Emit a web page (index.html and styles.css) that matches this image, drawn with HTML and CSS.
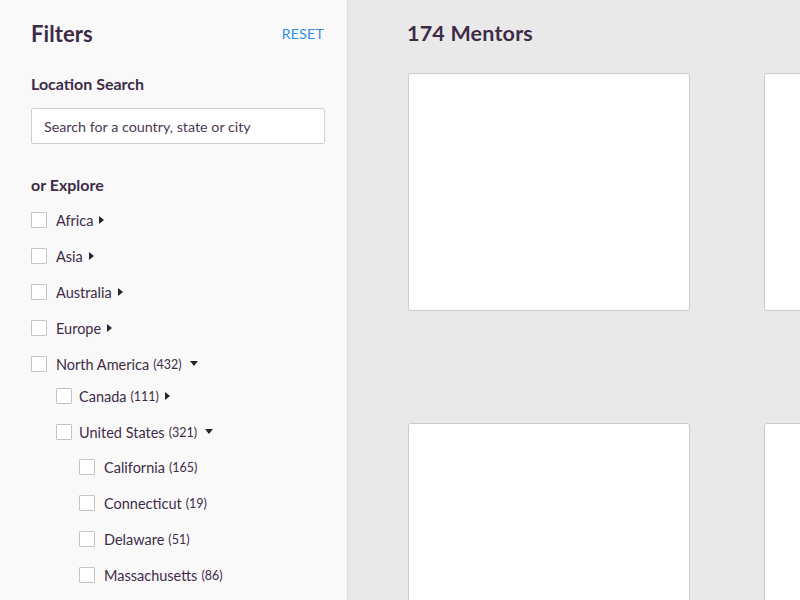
FILE: index.html
```html
<!DOCTYPE html>
<html lang="en">
<head>
  <meta charset="UTF-8" />
  <meta name="viewport" content="width=device-width, initial-scale=1.0" />
  <title>Mentors - Filters</title>
  <link rel="stylesheet" href="styles.css">
</head>
<body>
  <div class="page">
    <aside class="filters">
      <div class="filters-head">
        <h1>Filters</h1>
        <a href="#" class="reset">RESET</a>
      </div>

      <h2>Location Search</h2>
      <input type="text" class="search" placeholder="Search for a country, state or city" />

      <h2 class="explore">or Explore</h2>
      <ul class="tree">
        <li><label class="row"><span class="box"></span>Africa<svg class="arrow" width="6" height="8" viewBox="0 0 6 8"><path d="M0 0 L5 4 L0 8 Z"/></svg></label></li>
        <li><label class="row"><span class="box"></span>Asia<svg class="arrow" width="6" height="8" viewBox="0 0 6 8"><path d="M0 0 L5 4 L0 8 Z"/></svg></label></li>
        <li><label class="row"><span class="box"></span>Australia<svg class="arrow" width="6" height="8" viewBox="0 0 6 8"><path d="M0 0 L5 4 L0 8 Z"/></svg></label></li>
        <li><label class="row"><span class="box"></span>Europe<svg class="arrow" width="6" height="8" viewBox="0 0 6 8"><path d="M0 0 L5 4 L0 8 Z"/></svg></label></li>
        <li>
          <label class="row"><span class="box"></span>North America <span class="count">(432)</span><svg class="arrow down" width="8" height="6" viewBox="0 0 8 6"><path d="M0 0 L8 0 L4 5 Z"/></svg></label>
          <ul class="tree sub">
            <li><label class="row"><span class="box"></span>Canada <span class="count">(111)</span><svg class="arrow" width="6" height="8" viewBox="0 0 6 8"><path d="M0 0 L5 4 L0 8 Z"/></svg></label></li>
            <li>
              <label class="row"><span class="box"></span>United States <span class="count">(321)</span><svg class="arrow down" width="8" height="6" viewBox="0 0 8 6"><path d="M0 0 L8 0 L4 5 Z"/></svg></label>
              <ul class="tree sub states">
                <li><label class="row"><span class="box"></span>California <span class="count">(165)</span></label></li>
                <li><label class="row"><span class="box"></span>Connecticut <span class="count">(19)</span></label></li>
                <li><label class="row"><span class="box"></span>Delaware <span class="count">(51)</span></label></li>
                <li><label class="row"><span class="box"></span>Massachusetts <span class="count">(86)</span></label></li>
              </ul>
            </li>
          </ul>
        </li>
      </ul>
    </aside>

    <main class="results">
      <h1>174 Mentors</h1>
      <div class="cards">
        <div class="card"></div>
        <div class="card"></div>
        <div class="card"></div>
        <div class="card"></div>
      </div>
    </main>
  </div>
</body>
</html>
```

FILE: styles.css
```css
* {
  box-sizing: border-box;
  margin: 0;
  padding: 0;
  font-family: Lato, 'Open Sans', sans-serif;
}

html, body {
  height: 100%;
  overflow: hidden;
}

body {
  background: #e9e9e9;
  color: #3e2c47;
}

.page {
  display: flex;
  height: 600px;
}

.filters {
  width: 348px;
  flex-shrink: 0;
  background: #f9f9f9;
  border-right: 1px solid #dcdcdc;
  padding: 19px 23px 0 31px;
}

.filters-head {
  display: flex;
  justify-content: space-between;
  align-items: center;
  height: 28px;
}

.filters-head h1 {
  font-size: 22px;
  font-weight: 700;
  letter-spacing: 0.1px;
}

.reset {
  color: #2f8de4;
  text-decoration: none;
  font-size: 14px;
  letter-spacing: 0.3px;
}

.filters h2 {
  font-size: 16px;
  font-weight: 700;
  margin-top: 27px;
  line-height: 20px;
}

.search {
  display: block;
  width: 294px;
  height: 36px;
  margin-top: 14px;
  border: 1px solid #cfcfcf;
  border-radius: 2px;
  background: #fff;
  padding: 0 12px;
  font-size: 14.3px;
  color: #3e2c47;
}

.search::placeholder {
  color: #4a3a52;
}

.filters h2.explore {
  margin-top: 31px;
}

.tree {
  list-style: none;
  margin-top: 7px;
}

.tree.sub {
  margin-top: -4px;
  padding-left: 25px;
}

.tree.states {
  margin-top: -1px;
  padding-left: 23px;
}

.row {
  display: flex;
  align-items: center;
  height: 36px;
  font-size: 14.5px;
}

.box {
  width: 16px;
  height: 16px;
  border: 1px solid #c4c4c4;
  border-radius: 1px;
  background: #fff;
  margin-right: 9px;
  flex-shrink: 0;
}

.sub .box {
  margin-right: 7px;
}

.states .box {
  margin-right: 9px;
}

.count {
  font-size: 12.5px;
  margin-left: 4px;
}

.arrow {
  fill: #2b2230;
  margin-left: 6px;
}

.arrow.down {
  margin-left: 8px;
}

.results {
  flex: 1;
  padding: 19px 0 0 59px;
  overflow: hidden;
}

.results h1 {
  font-size: 21.5px;
  font-weight: 700;
  height: 28px;
  line-height: 28px;
  letter-spacing: 0.2px;
}

.cards {
  display: grid;
  grid-template-columns: 282px 282px;
  column-gap: 74px;
  row-gap: 112px;
  margin-top: 26px;
  margin-left: 1px;
}

.card {
  height: 238px;
  background: #fff;
  border: 1px solid #cccccc;
  border-radius: 3px;
}
```
